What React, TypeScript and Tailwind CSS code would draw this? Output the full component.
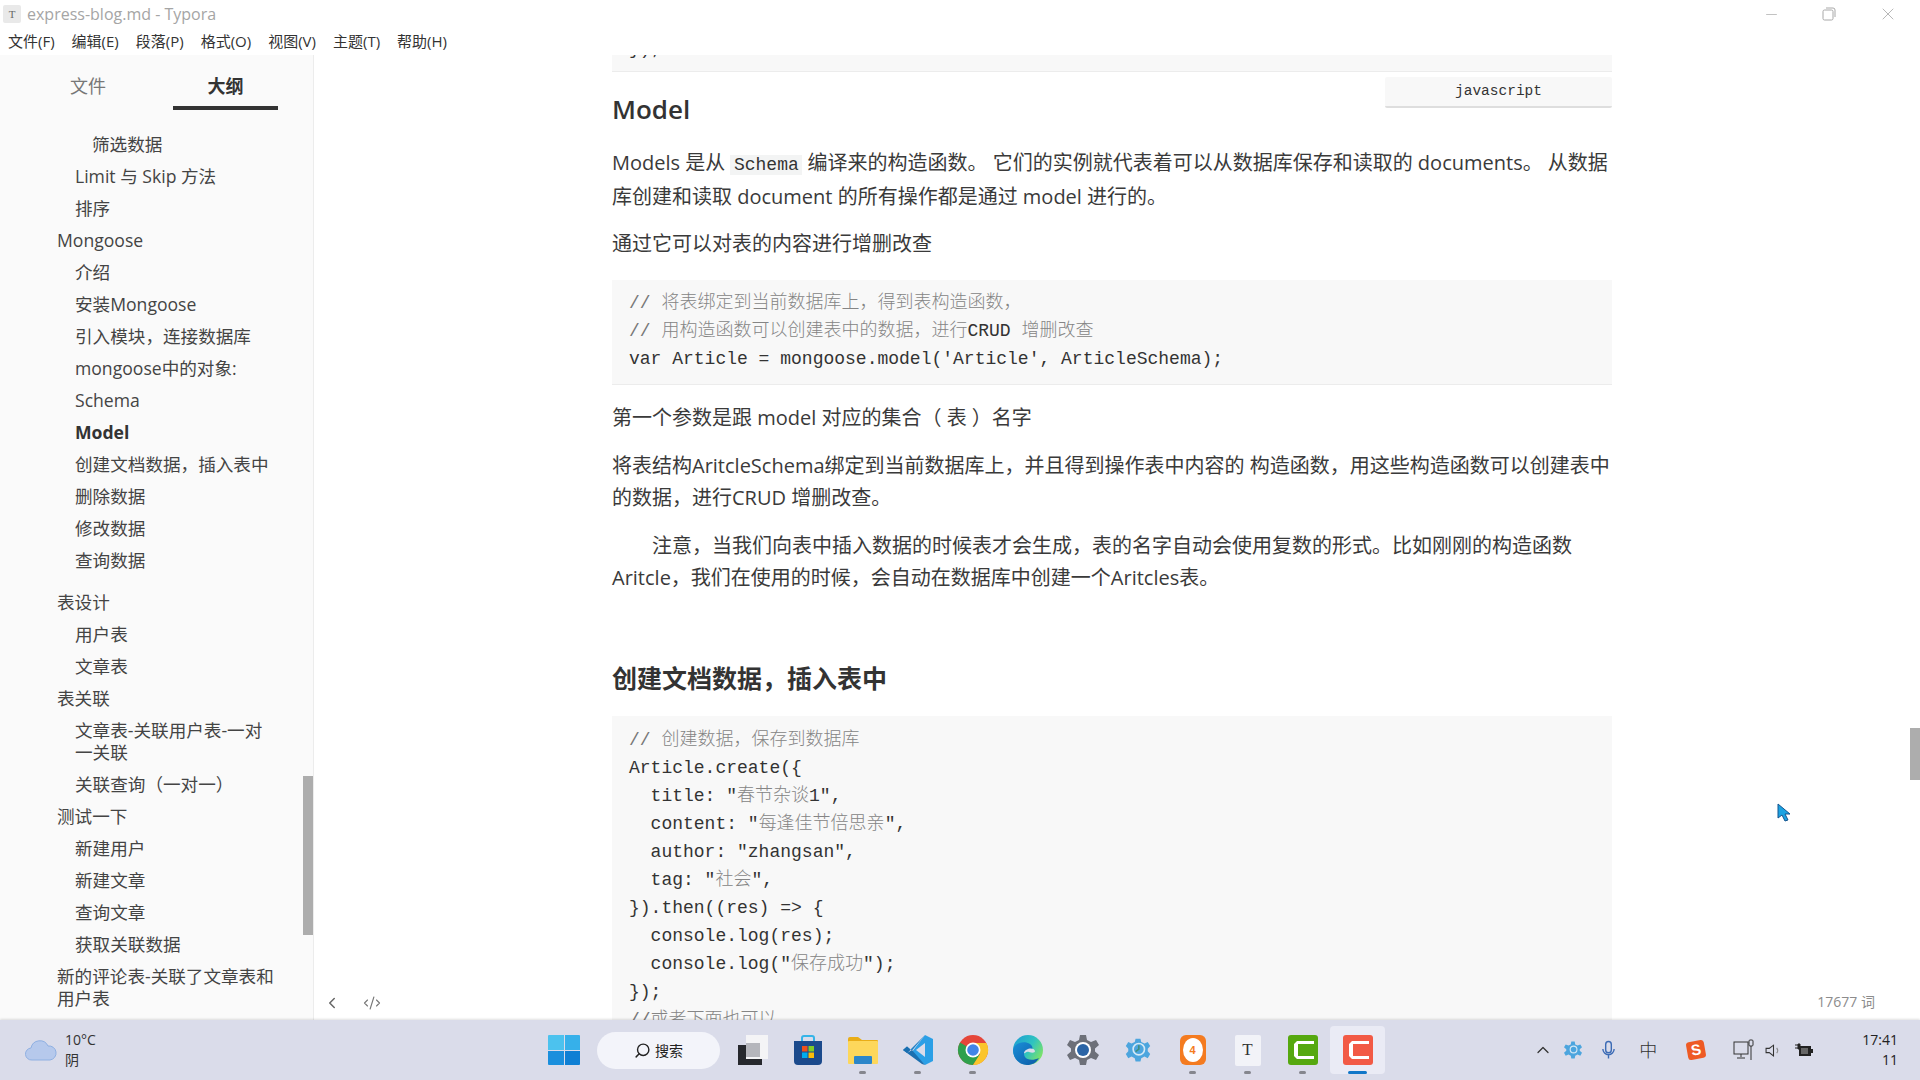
import React from 'react';
import { ChevronLeft, ChevronUp, Code2, Minus, Search, X } from 'lucide-react';

const outline: { text: string; level: number; bold?: boolean; gap?: boolean }[] = [
  { text: '筛选数据', level: 3 },
  { text: 'Limit 与 Skip 方法', level: 2 },
  { text: '排序', level: 2 },
  { text: 'Mongoose', level: 1 },
  { text: '介绍', level: 2 },
  { text: '安装Mongoose', level: 2 },
  { text: '引入模块，连接数据库', level: 2 },
  { text: 'mongoose中的对象:', level: 2 },
  { text: 'Schema', level: 2 },
  { text: 'Model', level: 2, bold: true },
  { text: '创建文档数据，插入表中', level: 2 },
  { text: '删除数据', level: 2 },
  { text: '修改数据', level: 2 },
  { text: '查询数据', level: 2 },
  { text: '表设计', level: 1, gap: true },
  { text: '用户表', level: 2 },
  { text: '文章表', level: 2 },
  { text: '表关联', level: 1 },
  { text: '文章表-关联用户表-一对一关联', level: 2 },
  { text: '关联查询（一对一）', level: 2 },
  { text: '测试一下', level: 1 },
  { text: '新建用户', level: 2 },
  { text: '新建文章', level: 2 },
  { text: '查询文章', level: 2 },
  { text: '获取关联数据', level: 2 },
  { text: '新的评论表-关联了文章表和用户表', level: 1 },
];

const menus = ['文件(F)', '编辑(E)', '段落(P)', '格式(O)', '视图(V)', '主题(T)', '帮助(H)'];

const Cjk = ({ children }: { children: React.ReactNode }) => <span className="text-[#858585] font-light">{children}</span>;

const CodeLine = ({ children }: { children: React.ReactNode }) => <div className="h-[28px] leading-[28px] whitespace-pre">{children}</div>;

const StoreIcon = () => (
  <svg viewBox="0 0 30 32" className="w-[30px] h-[32px]">
    <path d="M9 7V4a2 2 0 0 1 2-2h8a2 2 0 0 1 2 2v3" fill="none" stroke="#35b4e8" strokeWidth="2" />
    <path d="M1 7h28v20a4 4 0 0 1-4 4H5a4 4 0 0 1-4-4z" fill="#1b4a8c" />
    <rect x="9" y="12" width="5.5" height="5.5" fill="#f1511b" />
    <rect x="15.5" y="12" width="5.5" height="5.5" fill="#80cc28" />
    <rect x="9" y="18.5" width="5.5" height="5.5" fill="#00adef" />
    <rect x="15.5" y="18.5" width="5.5" height="5.5" fill="#fbbc09" />
  </svg>
);

const FolderIcon = () => (
  <svg viewBox="0 0 32 30" className="w-[32px] h-[30px]">
    <path d="M1 4a2 2 0 0 1 2-2h8l4 3h15a1 1 0 0 1 1 1v4H1z" fill="#e9ad17" />
    <rect x="1" y="6" width="30" height="23" rx="1" fill="#fdd75b" />
    <rect x="7" y="21" width="18" height="8" rx="1" fill="#2c86c9" />
  </svg>
);

const VsCodeIcon = () => (
  <svg viewBox="0 0 32 32" className="w-[32px] h-[32px]">
    <path d="M23 1l8 4v22l-8 4-13-13z" fill="#2b9fe6" />
    <path d="M23 9v14l-9-7z" fill="#dadcea" />
    <path d="M23 1L5 19l-4-3 4-3.5 5 4z" fill="#1f7fc4" />
    <path d="M1 16l4 3 3.5-3L5 12.500z M5 19l5-3 13 15-3-1z" fill="#1a6fb0" />
  </svg>
);

const ChromeIcon = () => (
  <svg viewBox="0 0 32 32" className="w-[32px] h-[32px]">
    <circle cx="16" cy="16" r="15" fill="#e5463a" />
    <path d="M16 16L3 8.500A15 15 0 0 0 16 31l7-10z" fill="#2fa04c" />
    <path d="M16 9h13.500A15 15 0 0 1 16 31l7-11z" fill="#fbc52c" />
    <circle cx="16" cy="16" r="7.500" fill="#fff" />
    <circle cx="16" cy="16" r="5.800" fill="#4285e8" />
  </svg>
);

const EdgeIcon = () => (
  <svg viewBox="0 0 32 32" className="w-[32px] h-[32px]">
    <defs>
      <linearGradient id="edgeTop" x1="0" y1="0" x2="1" y2="0.6">
        <stop offset="0" stopColor="#1c9bd6" />
        <stop offset="0.6" stopColor="#2fc3c0" />
        <stop offset="1" stopColor="#7be26a" />
      </linearGradient>
      <linearGradient id="edgeLow" x1="0" y1="0" x2="1" y2="1">
        <stop offset="0" stopColor="#1a8fd8" />
        <stop offset="1" stopColor="#0c5aa6" />
      </linearGradient>
    </defs>
    <circle cx="16" cy="16" r="15" fill="url(#edgeTop)" />
    <path d="M1 16C2 9 12 6 18 10c4 3 3 7-2 7-4 0-5 3-3 6 2 3 8 4 14 1-3 5-7 7-12 7C7 31 1 24 1 16z" fill="url(#edgeLow)" />
    <path d="M12 19c1-5 10-6 11-2 0 2-3 2-6 1-3-1-4 2-5 1z" fill="#dadcea" />
  </svg>
);

const GearIcon = ({ className, body, hub }: { className: string; body: string; hub: string }) => (
  <svg viewBox="0 0 32 32" className={className}>
    <path
      d="M13 1h6l1 5 4 2 5-2 3 5-4 3.500v3L32 21l-3 5-5-2-4 2-1 5h-6l-1-5-4-2-5 2-3-5 4-3.500v-3L0 11l3-5 5 2 4-2z"
      fill={body}
    />
    <circle cx="16" cy="16" r="8" fill="#fff" />
    <circle cx="16" cy="16" r="6" fill={hub} />
  </svg>
);

const IceIcon = () => (
  <svg viewBox="0 0 32 32" className="w-[26px] h-[26px]">
    <path
      d="M13 2h6l1 4 4 2 4-2 3 5-3 3.500v3l3 3.500-3 5-4-2-4 2-1 4h-6l-1-4-4-2-4 2-3-5 3-3.500v-3L1 11l3-5 4 2 4-2z"
      fill="#4ca5de"
    />
    <circle cx="17" cy="15" r="7" fill="none" stroke="#d5e9f6" strokeWidth="2" />
    <path d="M17 10v5l-4 3" fill="none" stroke="#3f8f7e" strokeWidth="2" />
  </svg>
);

const OrangeIcon = () => (
  <div className="w-[26px] h-[30px] rounded-[6px] bg-[#f47b20] flex items-center justify-center">
    <div className="w-[20px] h-[24px] rounded-[50%] bg-[#fff] flex items-center justify-center text-[11px] font-bold text-[#f47b20] font-['Liberation_Sans',sans-serif]">4</div>
  </div>
);

const TyporaIcon = () => (
  <div className="w-[26px] h-[31px] rounded-[2px] bg-[#f2f3f8] flex items-center justify-center text-[17px] text-[#333] font-['Liberation_Serif',serif]">T</div>
);

const CamtasiaIcon = ({ bg }: { bg: string }) => (
  <svg viewBox="0 0 30 30" className="w-[30px] h-[30px]">
    <rect width="30" height="30" rx="3" fill={bg} />
    <path d="M26 6H9L6 9v12l3 3h17v-3H10V9h16z" fill="#fff" />
  </svg>
);

const taskIcons: { icon: React.ReactNode; dot?: boolean; active?: boolean }[] = [
  {
    icon: (
      <div className="relative w-[30px] h-[30px]">
        <div className="absolute left-0 bottom-0 w-[24px] h-[20px] bg-[#26282d]" />
        <div className="absolute right-0 top-0 w-[22px] h-[24px] bg-[#f4f4f6]" />
        <div className="absolute left-[8px] top-[8px] w-[14px] h-[14px] bg-[#b5b6bc]" />
      </div>
    ),
  },
  { icon: <StoreIcon /> },
  { icon: <FolderIcon />, dot: true },
  { icon: <VsCodeIcon />, dot: true },
  { icon: <ChromeIcon />, dot: true },
  { icon: <EdgeIcon /> },
  { icon: <GearIcon className="w-[32px] h-[32px]" body="#6d7079" hub="#2b65a6" /> },
  { icon: <IceIcon /> },
  { icon: <OrangeIcon />, dot: true },
  { icon: <TyporaIcon />, dot: true },
  { icon: <CamtasiaIcon bg="#55a80f" />, dot: true },
  { icon: <CamtasiaIcon bg="#f25a45" />, active: true },
];

const App = () => {
  return (
    <div className="h-screen flex flex-col overflow-hidden bg-white text-[#3a3a3a] font-['Open_Sans','Noto_Sans_CJK_SC',sans-serif] relative">
      {/* Title Bar */}
      <div className="h-[28px] shrink-0 flex items-center pl-[3px]">
        <div className="w-[18px] h-[18px] bg-[#e9e9e9] rounded-[2px] flex items-center justify-center text-[11px] text-[#666] font-['Liberation_Serif',serif]">T</div>
        <span className="ml-[6px] text-[16px] text-[#a5a5a5]">express-blog.md - Typora</span>
        <div className="ml-auto flex items-center text-[#a8a8a8]">
          <Minus className="w-[17px] h-[17px] mr-[42px]" strokeWidth={1} />
          <svg viewBox="0 0 14 14" className="w-[14px] h-[14px] mr-[42px]" fill="none" stroke="currentColor">
            <rect x="1" y="3" width="10" height="10" rx="1.500" />
            <path d="M4 1h7a2 2 0 0 1 2 2v7" />
          </svg>
          <X className="w-[20px] h-[20px] mr-[22px]" strokeWidth={1} />
        </div>
      </div>

      {/* Menu Bar */}
      <div className="h-[27px] shrink-0 flex items-center pl-[8px] gap-[17px] text-[15px] text-[#333]">
        {menus.map((m) => (
          <span key={m}>{m}</span>
        ))}
      </div>

      <div className="flex-1 min-h-0 flex">
        {/* Sidebar */}
        <aside className="w-[314px] shrink-0 bg-[#fafafa] border-r border-[#ececec] flex flex-col relative overflow-hidden">
          <div className="h-[55px] shrink-0 flex">
            <div className="w-[173px] pl-[70px] pt-[19px] leading-[24px] text-[18px] text-[#777]">文件</div>
            <div className="w-[105px] h-[55px] border-b-[4px] border-[#333] pt-[19px] leading-[24px] text-center text-[18px] font-bold text-[#333]">大纲</div>
          </div>
          <div className="pt-[18px] pr-[34px] text-[17.6px] text-[#444]">
            {outline.map((o) => (
              <div
                key={o.text}
                className={`py-[5px] leading-[22px] ${o.level === 1 ? 'pl-[57px]' : o.level === 2 ? 'pl-[75px]' : 'pl-[92px]'} ${o.bold ? 'font-bold text-[#333]' : ''} ${o.gap ? 'mt-[10px]' : ''}`}
              >
                {o.text}
              </div>
            ))}
          </div>
          <div className="absolute right-0 top-[721px] w-[10px] h-[159px] bg-[#adadad]" />
        </aside>

        {/* Editor */}
        <main className="flex-1 min-w-0 relative overflow-hidden">
          <div className="w-[1000px] ml-[298px] text-[20px] leading-[32px]">
            <div className="h-[17px] bg-[#f8f8f8] border-b border-[#ececec] overflow-hidden font-['Liberation_Mono',monospace] text-[18px]">
              <div className="pl-[17px] -mt-[20px] leading-[28px] text-[#333]">{'});'}</div>
            </div>
            <h2 className="mt-[20px] h-[36px] leading-[34px] text-[26px] font-semibold text-[#333]">Model</h2>
            <p className="mt-[19px]">
              Models 是从{' '}
              <code className="bg-[#f3f4f4] px-[3.500px] font-['Liberation_Mono',monospace] text-[18px] text-[#333]">Schema</code>{' '}
              编译来的构造函数。 它们的实例就代表着可以从数据库保存和读取的 documents。 从数据库创建和读取 document 的所有操作都是通过 model 进行的。
            </p>
            <p className="mt-[15px]">通过它可以对表的内容进行增删改查</p>
            <pre className="mt-[20px] pt-[9px] pb-[11px] pl-[17px] bg-[#f8f8f8] border-b border-[#ececec] font-['Liberation_Mono','Noto_Sans_CJK_SC',monospace] text-[18px] text-[#333]">
              <CodeLine><span className="text-[#777]">// </span><Cjk>将表绑定到当前数据库上，得到表构造函数，</Cjk></CodeLine>
              <CodeLine><span className="text-[#777]">// </span><Cjk>用构造函数可以创建表中的数据，进行</Cjk>CRUD <Cjk>增删改查</Cjk></CodeLine>
              <CodeLine>{"var Article = mongoose.model('Article', ArticleSchema);"}</CodeLine>
            </pre>
            <p className="mt-[17px]">第一个参数是跟 model 对应的集合（ 表 ）名字</p>
            <p className="mt-[16px]">将表结构AritcleSchema绑定到当前数据库上，并且得到操作表中内容的 构造函数，用这些构造函数可以创建表中的数据，进行CRUD 增删改查。</p>
            <p className="mt-[16px] indent-[40px]">注意，当我们向表中插入数据的时候表才会生成，表的名字自动会使用复数的形式。比如刚刚的构造函数Aritcle，我们在使用的时候，会自动在数据库中创建一个Aritcles表。</p>
            <h2 className="mt-[66px] h-[36px] leading-[36px] text-[25px] font-bold text-[#333]">创建文档数据，插入表中</h2>
            <pre className="mt-[20px] pt-[10px] pl-[17px] bg-[#f8f8f8] font-['Liberation_Mono','Noto_Sans_CJK_SC',monospace] text-[18px] text-[#333]">
              <CodeLine><span className="text-[#777]">// </span><Cjk>创建数据，保存到数据库</Cjk></CodeLine>
              <CodeLine>{'Article.create({'}</CodeLine>
              <CodeLine>  title: "<Cjk>春节杂谈</Cjk>1",</CodeLine>
              <CodeLine>  content: "<Cjk>每逢佳节倍思亲</Cjk>",</CodeLine>
              <CodeLine>  author: "zhangsan",</CodeLine>
              <CodeLine>  tag: "<Cjk>社会</Cjk>",</CodeLine>
              <CodeLine>{'}).then((res) => {'}</CodeLine>
              <CodeLine>  console.log(res);</CodeLine>
              <CodeLine>  console.log("<Cjk>保存成功</Cjk>");</CodeLine>
              <CodeLine>{'});'}</CodeLine>
              <CodeLine><span className="text-[#777]">//</span><Cjk>或者下面也可以</Cjk></CodeLine>
            </pre>
          </div>

          {/* Language picker */}
          <div className="absolute left-[1071px] top-[22px] w-[227px] h-[31px] pt-[1px] bg-[#f8f8f8] border-b-2 border-[#dedede] rounded-[2px] flex items-center justify-center font-['Liberation_Mono',monospace] text-[14.500px] text-[#333]">
            javascript
          </div>

          {/* Footer controls */}
          <ChevronLeft className="absolute left-[9px] bottom-[8px] w-[18px] h-[18px] text-[#666]" strokeWidth={2} />
          <Code2 className="absolute left-[48px] bottom-[8px] w-[20px] h-[18px] text-[#777]" strokeWidth={1.5} />
          <span className="absolute right-[45px] bottom-[8px] text-[14px] leading-[20px] text-[#8c8c8c]">17677 词</span>

          <div className="absolute right-0 top-[673px] w-[10px] h-[52px] bg-[#adadad]" />
        </main>
      </div>

      {/* Taskbar */}
      <footer className="h-[60px] shrink-0 bg-[#dadcea] flex items-center shadow-[0_-1px_2px_rgba(0,0,0,0.12)] relative">
        <svg viewBox="0 0 32 22" className="ml-[25px] w-[32px] h-[22px]">
          <path d="M7 21a6 6 0 0 1-1-12 9 9 0 0 1 17-2 7 7 0 0 1 2 14z" fill="#b6c9ec" stroke="#8fb0e2" />
        </svg>
        <div className="ml-[8px] w-[64px] text-[14px] leading-[20px] text-[#333]">
          <div>10°C</div>
          <div>阴</div>
        </div>
        <div className="ml-[419px] grid grid-cols-2 gap-[1px] w-[32px] h-[30px] rounded-[1px] overflow-hidden">
          <div className="bg-[#4cc2ee]" />
          <div className="bg-[#36b0ea]" />
          <div className="bg-[#1a8fdd]" />
          <div className="bg-[#0e7fd4]" />
        </div>
        <div className="ml-[17px] w-[123px] h-[37px] rounded-full bg-[#f3f4fa] flex items-center justify-center gap-[4px] text-[14px] text-[#222]">
          <Search className="w-[17px] h-[17px] -scale-x-100" strokeWidth={2} />
          搜索
        </div>
        <div className="flex ml-[5px]">
          {taskIcons.map((t, i) => (
            <div
              key={i}
              className={`relative w-[55px] h-[48px] rounded-[4px] flex items-center justify-center ${t.active ? 'bg-[#eaebf5]' : ''}`}
            >
              {t.icon}
              {t.dot && <div className="absolute bottom-0 left-[24px] w-[7px] h-[3px] rounded-full bg-[#85868e]" />}
              {t.active && <div className="absolute bottom-0 left-[18px] w-[19px] h-[3px] rounded-full bg-[#1076c8]" />}
            </div>
          ))}
        </div>

        {/* Tray */}
        <div className="ml-auto flex items-center h-full text-[#333]">
          <ChevronUp className="w-[20px] h-[20px]" strokeWidth={1.5} />
          <div className="ml-[11px]">
            <svg viewBox="0 0 32 32" className="w-[18px] h-[18px]">
              <path d="M13 1h6l1 5 4 2 5-2 3 5-4 3.500v3L32 21l-3 5-5-2-4 2-1 5h-6l-1-5-4-2-5 2-3-5 4-3.500v-3L0 11l3-5 5 2 4-2z" fill="#4ca5de" />
              <circle cx="17" cy="15" r="6" fill="none" stroke="#d5e9f6" strokeWidth="2" />
            </svg>
          </div>
          <svg viewBox="0 0 16 20" className="ml-[19px] w-[15px] h-[20px]" fill="none" stroke="#3c6bb5" strokeWidth="1.500">
            <rect x="5" y="1" width="6" height="12" rx="3" />
            <path d="M2 9a6 6 0 0 0 12 0M8 15v4" />
          </svg>
          <span className="ml-[23px] w-[18px] text-[18px] font-light leading-none">中</span>
          <div className="ml-[30px] w-[18px] h-[18px] rounded-[3px] bg-[#ee5a24] rotate-[-10deg] flex items-center justify-center text-[15px] font-bold text-white font-['Liberation_Sans',sans-serif]">S</div>
          <svg viewBox="0 0 22 22" className="ml-[28px] w-[22px] h-[22px]" fill="none" stroke="#333" strokeWidth="1">
            <rect x="1" y="3" width="14" height="12" />
            <path d="M8 15v3M4 19h8M18 7v14" />
            <rect x="16" y="1" width="4" height="6" rx="1" />
          </svg>
          <svg viewBox="0 0 16 16" className="ml-[10px] w-[17px] h-[17px]" fill="none" stroke="#333" strokeWidth="1">
            <path d="M1 6v4h3l4 3V3L4 6z" />
            <path d="M11 5.500a4 4 0 0 1 0 5" stroke="#888" />
          </svg>
          <svg viewBox="0 0 20 16" className="ml-[12px] w-[20px] h-[16px]">
            <path d="M1 3h3M1 6h3M4 2h2v5H4z" stroke="#222" fill="#222" />
            <rect x="5" y="4" width="12" height="10" fill="#222" />
            <rect x="7" y="6" width="7" height="6" fill="#666" />
            <rect x="17" y="7" width="2" height="4" fill="#222" />
          </svg>
          <div className="ml-[48px] mr-[22px] text-right text-[14px] leading-[20px] text-[#222]">
            <div>17:41</div>
            <div>11</div>
          </div>
        </div>
      </footer>

      {/* Mouse cursor */}
      <svg viewBox="0 0 14 20" className="absolute left-[1777px] top-[803px] w-[14px] h-[20px]">
        <path d="M1 1v14l4-3 3 6 3-1-3-6h5z" fill="#1ba3e2" stroke="#14558f" strokeWidth="1" />
      </svg>
    </div>
  );
};

export default App;
